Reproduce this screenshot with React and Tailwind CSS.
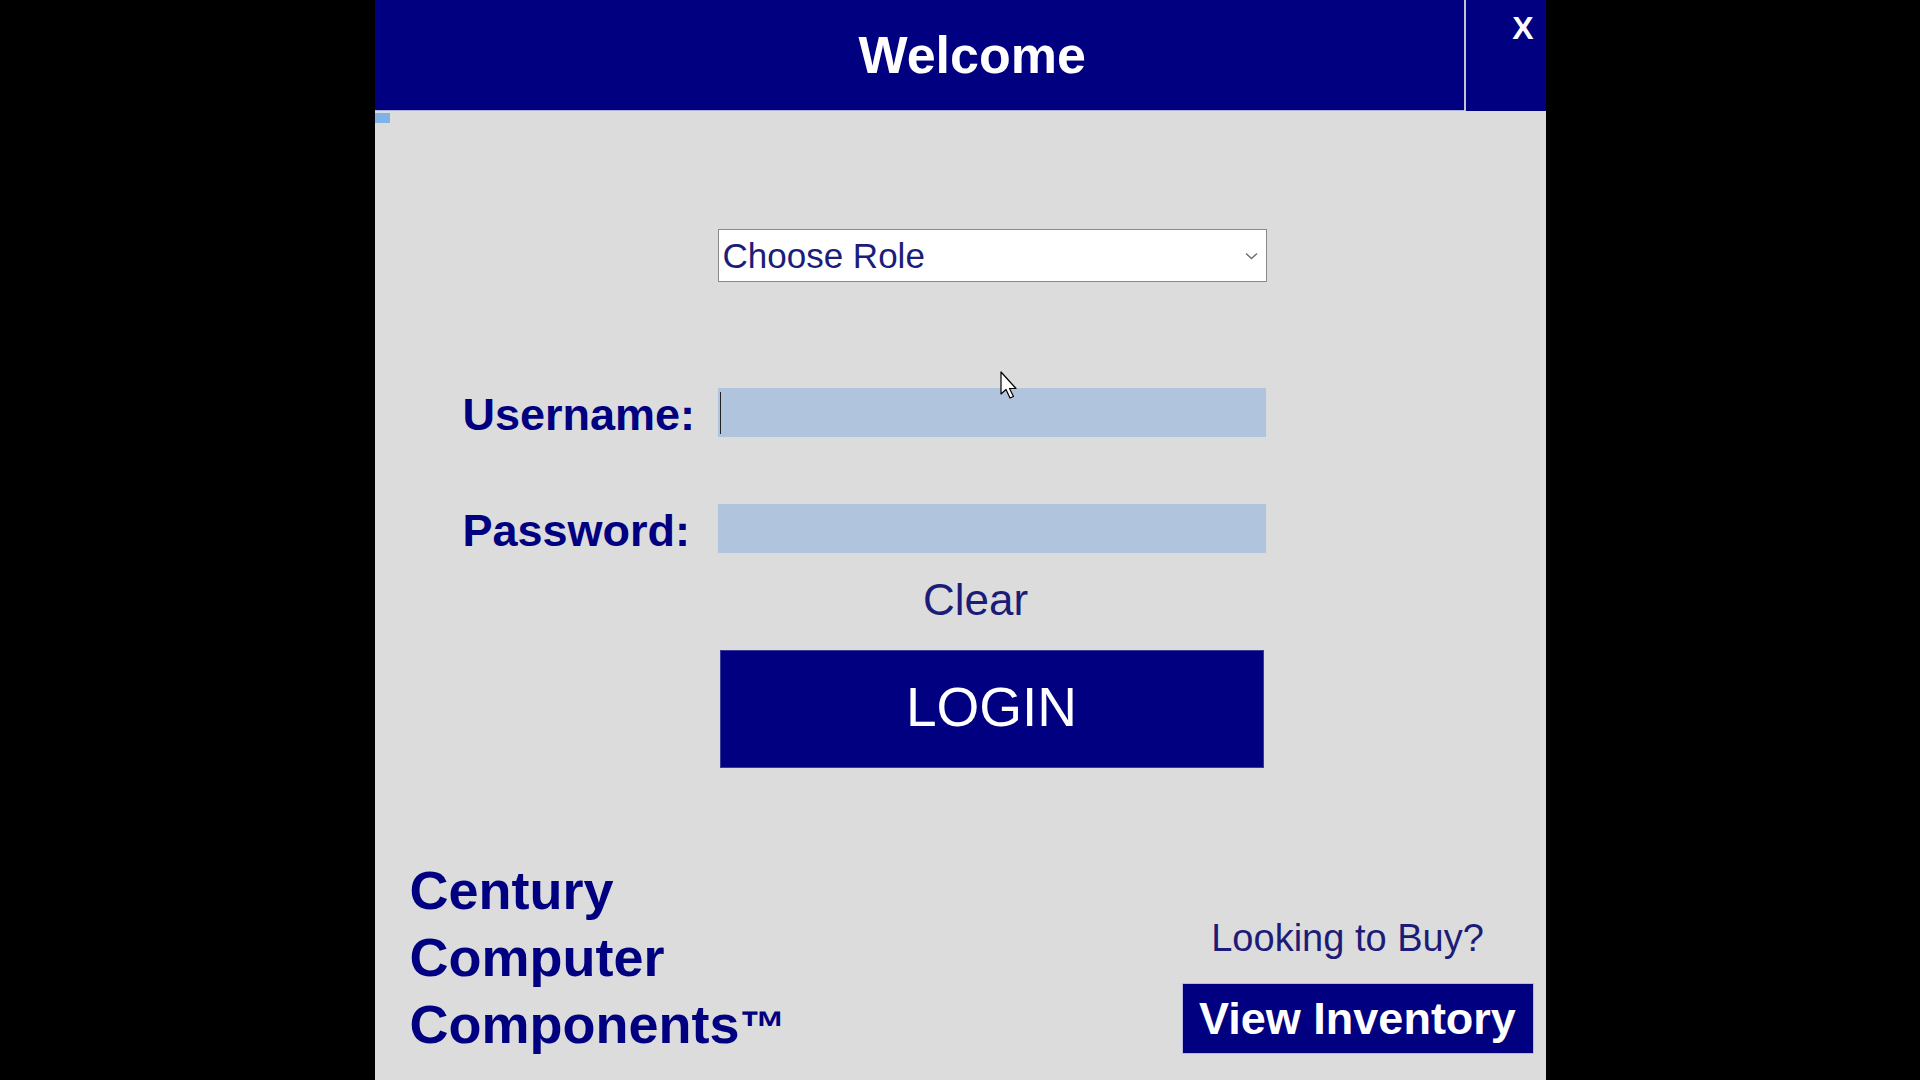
export default function App() {
  return (
    <div className="min-h-screen w-full bg-black flex justify-center font-['Liberation_Sans',Arial,sans-serif]">
      <div className="w-[1171px] h-[1080px] bg-[#dcdcdc] flex flex-col relative overflow-hidden">
        {/* Header */}
        <div className="flex h-[111px] shrink-0">
          <div className="flex-1 bg-[#000080] border-b border-[#aeb2d6] flex items-center pl-[484px]">
            <span className="text-white text-[52px] font-bold leading-none">Welcome</span>
          </div>
          <div className="w-[82px] bg-[#000080] border-l-2 border-[#c4c4cc] flex justify-end items-start pr-[12px] pt-[12px]">
            <span className="text-white text-[32px] font-bold leading-none">X</span>
          </div>
        </div>

        {/* Body */}
        <div className="flex-1 relative flex flex-col">
          <div className="absolute left-0 top-[2px] w-[15px] h-[10px] bg-[#7fb2e5]" />

          {/* Combobox */}
          <div className="mt-[118px] ml-[343px] w-[549px] h-[53px] bg-white border border-[#8a8a8a] flex items-center justify-between pl-[4px] pr-[8px]">
            <span className="text-[35px] leading-none text-[#1c1c7a]">Choose Role</span>
            <svg width="13" height="8" viewBox="0 0 13 8" fill="none">
              <path d="M1 1.5 L6.5 6.5 L12 1.5" stroke="#707070" strokeWidth="1.5" />
            </svg>
          </div>

          {/* Username */}
          <div className="mt-[106px] flex items-center h-[49px]">
            <div className="w-[343px] pl-[88px] pt-[3px] text-[45px] font-bold leading-none text-[#000080]">Username:</div>
            <div className="w-[548px] h-full bg-[#b0c4de] relative">
              <div className="absolute left-[2px] top-[4px] bottom-[3px] w-[1px] bg-[#222]" />
            </div>
          </div>

          {/* Password */}
          <div className="mt-[67px] flex items-center h-[49px]">
            <div className="w-[343px] pl-[88px] pt-[3px] text-[45px] font-bold leading-none text-[#000080]">Password:</div>
            <div className="w-[548px] h-full bg-[#b0c4de]" />
          </div>

          {/* Clear */}
          <div className="mt-[22px] ml-[343px] w-[516px] text-center text-[44px] leading-[50px] text-[#1c1c78]">Clear</div>

          {/* Login */}
          <div className="mt-[25px] ml-[345px] w-[544px] h-[118px] bg-[#000080] border border-[#3a3a9a] flex items-center justify-center pb-[4px]">
            <span className="text-white text-[55px] leading-none">LOGIN</span>
          </div>

          {/* Bottom row */}
          <div className="mt-[89px] flex justify-between items-start">
            <div className="ml-[35px] text-[54px] font-bold leading-[67px] text-[#000080]">
              <div>Century</div>
              <div>Computer</div>
              <div>Components<span className="text-[46px]">™</span></div>
            </div>
            <div className="mr-[12px] flex flex-col items-stretch w-[352px]">
              <div className="mt-[59px] pr-[20px] text-center text-[38px] leading-[44px] text-[#1c1c78]">Looking to Buy?</div>
              <div className="mt-[23px] h-[71px] bg-[#000080] border border-[#b8b8e8] flex items-center justify-center">
                <span className="text-white text-[45px] font-bold leading-none">View Inventory</span>
              </div>
            </div>
          </div>

          {/* Mouse cursor */}
          <svg className="absolute left-[625px] top-[260px]" width="20" height="30" viewBox="0 0 20 30">
            <path d="M1 1 L1 23 L6 18.5 L10 27 L13.5 25.5 L9.5 17.5 L16 17.5 Z" fill="#ffffff" stroke="#000000" strokeWidth="1.2" strokeLinejoin="round" />
          </svg>
        </div>
      </div>
    </div>
  );
}
